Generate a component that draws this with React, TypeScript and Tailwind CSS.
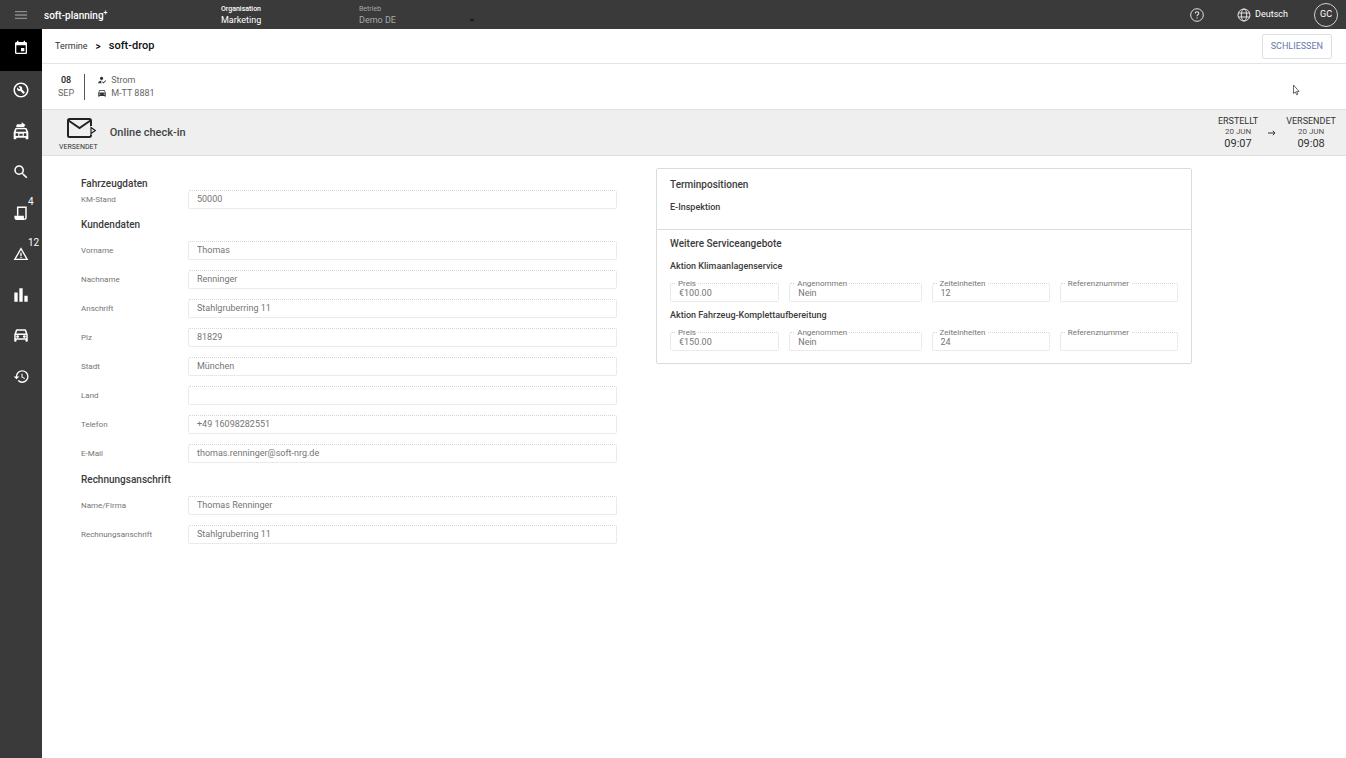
import { useId, type ReactNode } from "react";
import {
  MdBarChart,
  MdDirectionsCar,
  MdEvent,
  MdHistory,
  MdHowToReg,
  MdMenu,
  MdOutlineBuildCircle,
  MdSearch,
  MdWarningAmber,
} from "react-icons/md";

function ReplacementCarIcon() {
  return (
    <svg viewBox="0 0 24 27" className="h-[18px] w-4" fill="currentColor" aria-hidden="true">
      <path d="M5 7.800V5.500c0-1.400.9-2.300 2.300-2.300H13V.3l5.800 4.200-2.300 1.700L18 7.800z" />
      <path
        fillRule="evenodd"
        d="M4.500 9h15c.6 0 1 .3 1.200.8L23 15.500V25c0 .6-.4 1-1 1h-2c-.6 0-1-.4-1-1v-1.500H5V25c0 .6-.4 1-1 1H2c-.6 0-1-.4-1-1v-9.500L3.300 9.800c.2-.5.600-.8 1.200-.8zM5.400 11 4 14.500h16L18.600 11zM4 17v4h3.800v-4zM16.200 17v4H20v-4zM9.500 17.500v3h5v-3z"
      />
    </svg>
  );
}

function ReceiptIcon() {
  return (
    <svg viewBox="0 0 24 24" className="size-4" fill="none" stroke="currentColor" strokeWidth="2.2" aria-hidden="true">
      <path d="M7 16V3.500h12.500V19c0 1.500-1 2.300-2.300 2.300" />
      <path d="M3.200 17.200h12v1.800c0 1.300.8 2.300 2 2.300H5.500c-1.400 0-2.300-1-2.300-2.300z" fill="currentColor" />
    </svg>
  );
}

function CarFrontIcon() {
  return (
    <svg viewBox="0 0 24 24" className="size-[18px]" fill="currentColor" aria-hidden="true">
      <path
        fillRule="evenodd"
        d="M18.900 4c-.2-.6-.8-1-1.400-1h-11c-.7 0-1.200.4-1.400 1L3 10v8.500c0 .6.500 1 1 1h1c.6 0 1-.4 1-1V17h12v1.500c0 .6.500 1 1 1h1c.6 0 1-.4 1-1V10zM6.800 5h10.300l1.200 3.500H5.700zM5 10.500h14V15H5z"
      />
      <circle cx="7.500" cy="12.800" r="1.900" />
      <circle cx="16.500" cy="12.800" r="1.900" />
    </svg>
  );
}

function HelpIcon() {
  return (
    <svg viewBox="0 0 16 16" className="size-4" fill="none" stroke="#e4e4e4" aria-hidden="true">
      <circle cx="8" cy="8" r="6.300" />
      <path d="M6.200 6.500c0-1.100.8-1.800 1.800-1.800s1.800.7 1.800 1.600c0 1.300-1.800 1.400-1.800 2.900" strokeWidth="1.100" />
      <path d="M8 10.400v1.200" strokeWidth="1.200" />
    </svg>
  );
}

function GlobeIcon() {
  return (
    <svg viewBox="0 0 14 14" className="size-3.5" fill="none" stroke="#e4e4e4" aria-hidden="true">
      <circle cx="7" cy="7" r="6" />
      <ellipse cx="7" cy="7" rx="2.700" ry="6" />
      <path d="M1.300 5h11.400M1.300 9h11.400" />
    </svg>
  );
}

function MailSentIcon() {
  return (
    <svg viewBox="0 0 30 22" className="ml-1.5 h-[22px] w-[30px]" fill="none" stroke="#222" strokeWidth="2" aria-hidden="true">
      <path d="M25 17.500v1a1.500 1.500 0 0 1-1.500 1.500H3.500A1.500 1.500 0 0 1 2 18.500V3.500A1.500 1.500 0 0 1 3.500 2h20A1.500 1.500 0 0 1 25 3.500V9" />
      <path d="m2.500 3.500 11 7.500 11-7.500" />
      <path d="m25 10.500 4.300 3-4.300 3z" strokeWidth="1.200" />
    </svg>
  );
}

type NavItem = { label: string; icon: ReactNode; badge?: string };

const navItems: NavItem[] = [
  { label: "Werkstatt", icon: <MdOutlineBuildCircle className="size-[18px]" /> },
  { label: "Ersatzwagen", icon: <ReplacementCarIcon /> },
  { label: "Suche", icon: <MdSearch className="size-[18px]" /> },
  { label: "Belege", icon: <ReceiptIcon />, badge: "4" },
  { label: "Warnungen", icon: <MdWarningAmber className="size-4" />, badge: "12" },
  { label: "Statistik", icon: <MdBarChart className="size-5" /> },
  { label: "Fahrzeuge", icon: <CarFrontIcon /> },
  { label: "Verlauf", icon: <MdHistory className="size-[17px]" /> },
];

function Sidebar() {
  return (
    <nav className="flex w-[42px] shrink-0 flex-col bg-[#3a3a3a] text-white">
      <a
        href="#termine"
        aria-label="Termine"
        className="-mb-0.5 flex h-[42px] items-center justify-center bg-black pb-1"
      >
        <MdEvent className="size-4" />
      </a>
      {navItems.map((item) => (
        <a
          key={item.label}
          href={"#" + item.label.toLowerCase()}
          aria-label={item.label}
          className="relative flex h-[41px] items-center justify-center"
        >
          {item.icon}
          {item.badge && (
            <span className="absolute top-1 left-7 text-[10px] leading-3">{item.badge}</span>
          )}
        </a>
      ))}
    </nav>
  );
}

function TopBar() {
  return (
    <header className="flex h-[29px] items-center bg-[#3a3a3a] pt-px text-white">
      <button type="button" aria-label="Menü" className="flex w-[42px] justify-center text-[#8c8c8c]">
        <MdMenu className="size-4" />
      </button>
      <span className="w-[179px] pl-0.5 text-[10px] font-medium">
        soft-planning<sup className="text-[7px]">+</sup>
      </span>
      <div className="w-[138px]">
        <div className="text-[7px] leading-[10px] font-medium">Organisation</div>
        <div className="text-[9px] leading-3">Marketing</div>
      </div>
      <div className="relative w-[118px] text-[#a9a9a9]">
        <label htmlFor="betrieb" className="block text-[7px] leading-[10px]">
          Betrieb
        </label>
        <select id="betrieb" className="block h-3 w-full appearance-none bg-transparent text-[9px] leading-3">
          <option>Demo DE</option>
        </select>
        <svg
          viewBox="0 0 6 3"
          className="pointer-events-none absolute right-0.5 bottom-1 h-[3px] w-1.5"
          fill="#1c1c1c"
          aria-hidden="true"
        >
          <path d="M0 0h6L3 3z" />
        </svg>
      </div>
      <div className="ml-auto flex items-center pr-2">
        <button type="button" aria-label="Hilfe" className="mr-8">
          <HelpIcon />
        </button>
        <button type="button" className="mr-[26px] flex items-center gap-1 text-[9px]">
          <GlobeIcon />
          Deutsch
        </button>
        <button
          type="button"
          className="flex size-6 items-center justify-center rounded-full border border-[#d0d0d0] text-[9px]"
        >
          GC
        </button>
      </div>
    </header>
  );
}

function Timestamp({ label, date, time }: { label: string; date: string; time: string }) {
  return (
    <div className="text-center text-[#333]">
      <div className="text-[9px] leading-[11px]">{label}</div>
      <div className="text-[8px] leading-[10px] text-[#555]">{date}</div>
      <div className="text-[11px] leading-[13px]">{time}</div>
    </div>
  );
}

function FormRow({ label, value }: { label: string; value: string }) {
  const id = useId();
  return (
    <div className="flex items-center">
      <label htmlFor={id} className="w-[107px] shrink-0 text-[8px] leading-3 text-[#757575]">
        {label}
      </label>
      <input
        id={id}
        defaultValue={value}
        readOnly
        className="h-[19px] min-w-0 flex-1 rounded-xs border border-dotted border-[#d6d6d6] bg-transparent px-2 pb-0.5 text-[9px] text-[#757575] outline-none"
      />
    </div>
  );
}

function SectionTitle({ children }: { children: ReactNode }) {
  return <h2 className="text-[10px] leading-3 font-medium text-[#3c3c3c]">{children}</h2>;
}

function OutlinedField({ label, value }: { label: string; value: string }) {
  const id = useId();
  return (
    <div className="relative">
      <label htmlFor={id} className="absolute -top-1 left-1.5 bg-white px-0.5 text-[8px] leading-[9px] text-[#757575]">
        {label}
      </label>
      <input
        id={id}
        defaultValue={value}
        readOnly
        className="block h-[19px] w-full rounded-xs border border-dotted border-[#d6d6d6] bg-transparent px-2 text-[9px] text-[#757575] outline-none"
      />
    </div>
  );
}

function Offer({ title, price, units }: { title: string; price: string; units: string }) {
  return (
    <section>
      <h3 className="text-[9px] leading-3 font-medium text-[#3c3c3c]">{title}</h3>
      <div className="mt-[11px] grid grid-cols-[109fr_132fr_118fr_118fr] gap-2.5">
        <OutlinedField label="Preis" value={price} />
        <OutlinedField label="Angenommen" value="Nein" />
        <OutlinedField label="Zeiteinheiten" value={units} />
        <OutlinedField label="Referenznummer" value="" />
      </div>
    </section>
  );
}

const customer: [string, string][] = [
  ["Vorname", "Thomas"],
  ["Nachname", "Renninger"],
  ["Anschrift", "Stahlgruberring 11"],
  ["Plz", "81829"],
  ["Stadt", "München"],
  ["Land", ""],
  ["Telefon", "+49 16098282551"],
  ["E-Mail", "thomas.renninger@soft-nrg.de"],
];

const billing: [string, string][] = [
  ["Name/Firma", "Thomas Renninger"],
  ["Rechnungsanschrift", "Stahlgruberring 11"],
];

export default function App() {
  return (
    <div className="flex min-h-screen flex-col bg-white font-[Roboto,sans-serif]">
      <TopBar />
      <div className="flex flex-1">
        <Sidebar />
        <main className="min-w-0 flex-1">
          <div className="flex h-[35px] items-center border-b border-[#e4e4e4] pt-px pr-3.5 pl-[13px]">
            <a href="#termine" className="text-[9px] text-[#333]">
              Termine
            </a>
            <span className="mx-2 text-[10px] font-medium">&gt;</span>
            <h1 className="text-[11px] font-medium text-[#111]">soft-drop</h1>
            <button
              type="button"
              className="ml-auto h-[25px] rounded-xs border border-[#dcdfe6] px-2 text-[9px] text-[#6579ab]"
            >
              SCHLIESSEN
            </button>
          </div>

          <div className="relative flex h-[45px] items-center pl-4 text-[9px] leading-[13px] text-[#666]">
            <div className="border-r border-[#555] pr-2.5 text-center">
              <div className="font-medium text-[#222]">08</div>
              <div>SEP</div>
            </div>
            <div className="pl-3">
              <div className="flex items-center gap-1">
                <MdHowToReg className="size-2.5 text-[#333]" />
                Strom
              </div>
              <div className="flex items-center gap-1">
                <MdDirectionsCar className="size-2.5 text-[#333]" />
                M-TT 8881
              </div>
            </div>
            <svg
              viewBox="0 0 8 12"
              className="pointer-events-none absolute top-5 right-[46px] h-3 w-2"
              fill="#fff"
              stroke="#444"
              strokeWidth="0.8"
              aria-hidden="true"
            >
              <path d="M1.500 1v8.500l1.900-1.600 1.300 2.900 1.200-.6-1.300-2.700h2.500z" />
            </svg>
          </div>

          <div className="flex h-[47px] items-center border-y border-[#e0e0e0] bg-[#efefef] pr-2.5 pl-[17px]">
            <div className="flex flex-col items-center pt-[3px]">
              <MailSentIcon />
              <span className="mt-1 text-[7px] leading-[9px] text-[#333]">VERSENDET</span>
            </div>
            <span className="ml-3 pt-0.5 text-[11px] font-medium text-[#444]">Online check-in</span>
            <div className="ml-auto flex items-center gap-2.5 text-[#333]">
              <Timestamp label="ERSTELLT" date="20 JUN" time="09:07" />
              <svg viewBox="0 0 8 6" className="h-1.5 w-2" fill="none" stroke="currentColor" aria-hidden="true">
                <path d="M0 3h7M4.800.8 7 3 4.800 5.200" />
              </svg>
              <Timestamp label="VERSENDET" date="20 JUN" time="09:08" />
            </div>
          </div>

          <div className="grid grid-cols-2 items-start gap-x-[39px] pt-3 pr-[154px] pb-6 pl-[39px]">
            <form className="pt-2.5">
              <SectionTitle>Fahrzeugdaten</SectionTitle>
              <FormRow label="KM-Stand" value="50000" />
              <div className="pt-2.5 pb-2.5">
                <SectionTitle>Kundendaten</SectionTitle>
              </div>
              <div className="flex flex-col gap-2.5">
                {customer.map(([label, value]) => (
                  <FormRow key={label} label={label} value={value} />
                ))}
              </div>
              <div className="pt-[11px] pb-2.5">
                <SectionTitle>Rechnungsanschrift</SectionTitle>
              </div>
              <div className="flex flex-col gap-2.5">
                {billing.map(([label, value]) => (
                  <FormRow key={label} label={label} value={value} />
                ))}
              </div>
            </form>

            <div className="rounded-xs border border-[#dcdcdc]">
              <section className="border-b border-[#dcdcdc] px-[13px] pt-2.5 pb-4">
                <SectionTitle>Terminpositionen</SectionTitle>
                <p className="mt-2.5 text-[9px] leading-3 font-medium text-[#3c3c3c]">E-Inspektion</p>
              </section>
              <section className="px-[13px] pt-2 pb-3">
                <SectionTitle>Weitere Serviceangebote</SectionTitle>
                <div className="mt-2.5 flex flex-col gap-[7px]">
                  <Offer title="Aktion Klimaanlagenservice" price="€100.00" units="12" />
                  <Offer title="Aktion Fahrzeug-Komplettaufbereitung" price="€150.00" units="24" />
                </div>
              </section>
            </div>
          </div>
        </main>
      </div>
    </div>
  );
}
